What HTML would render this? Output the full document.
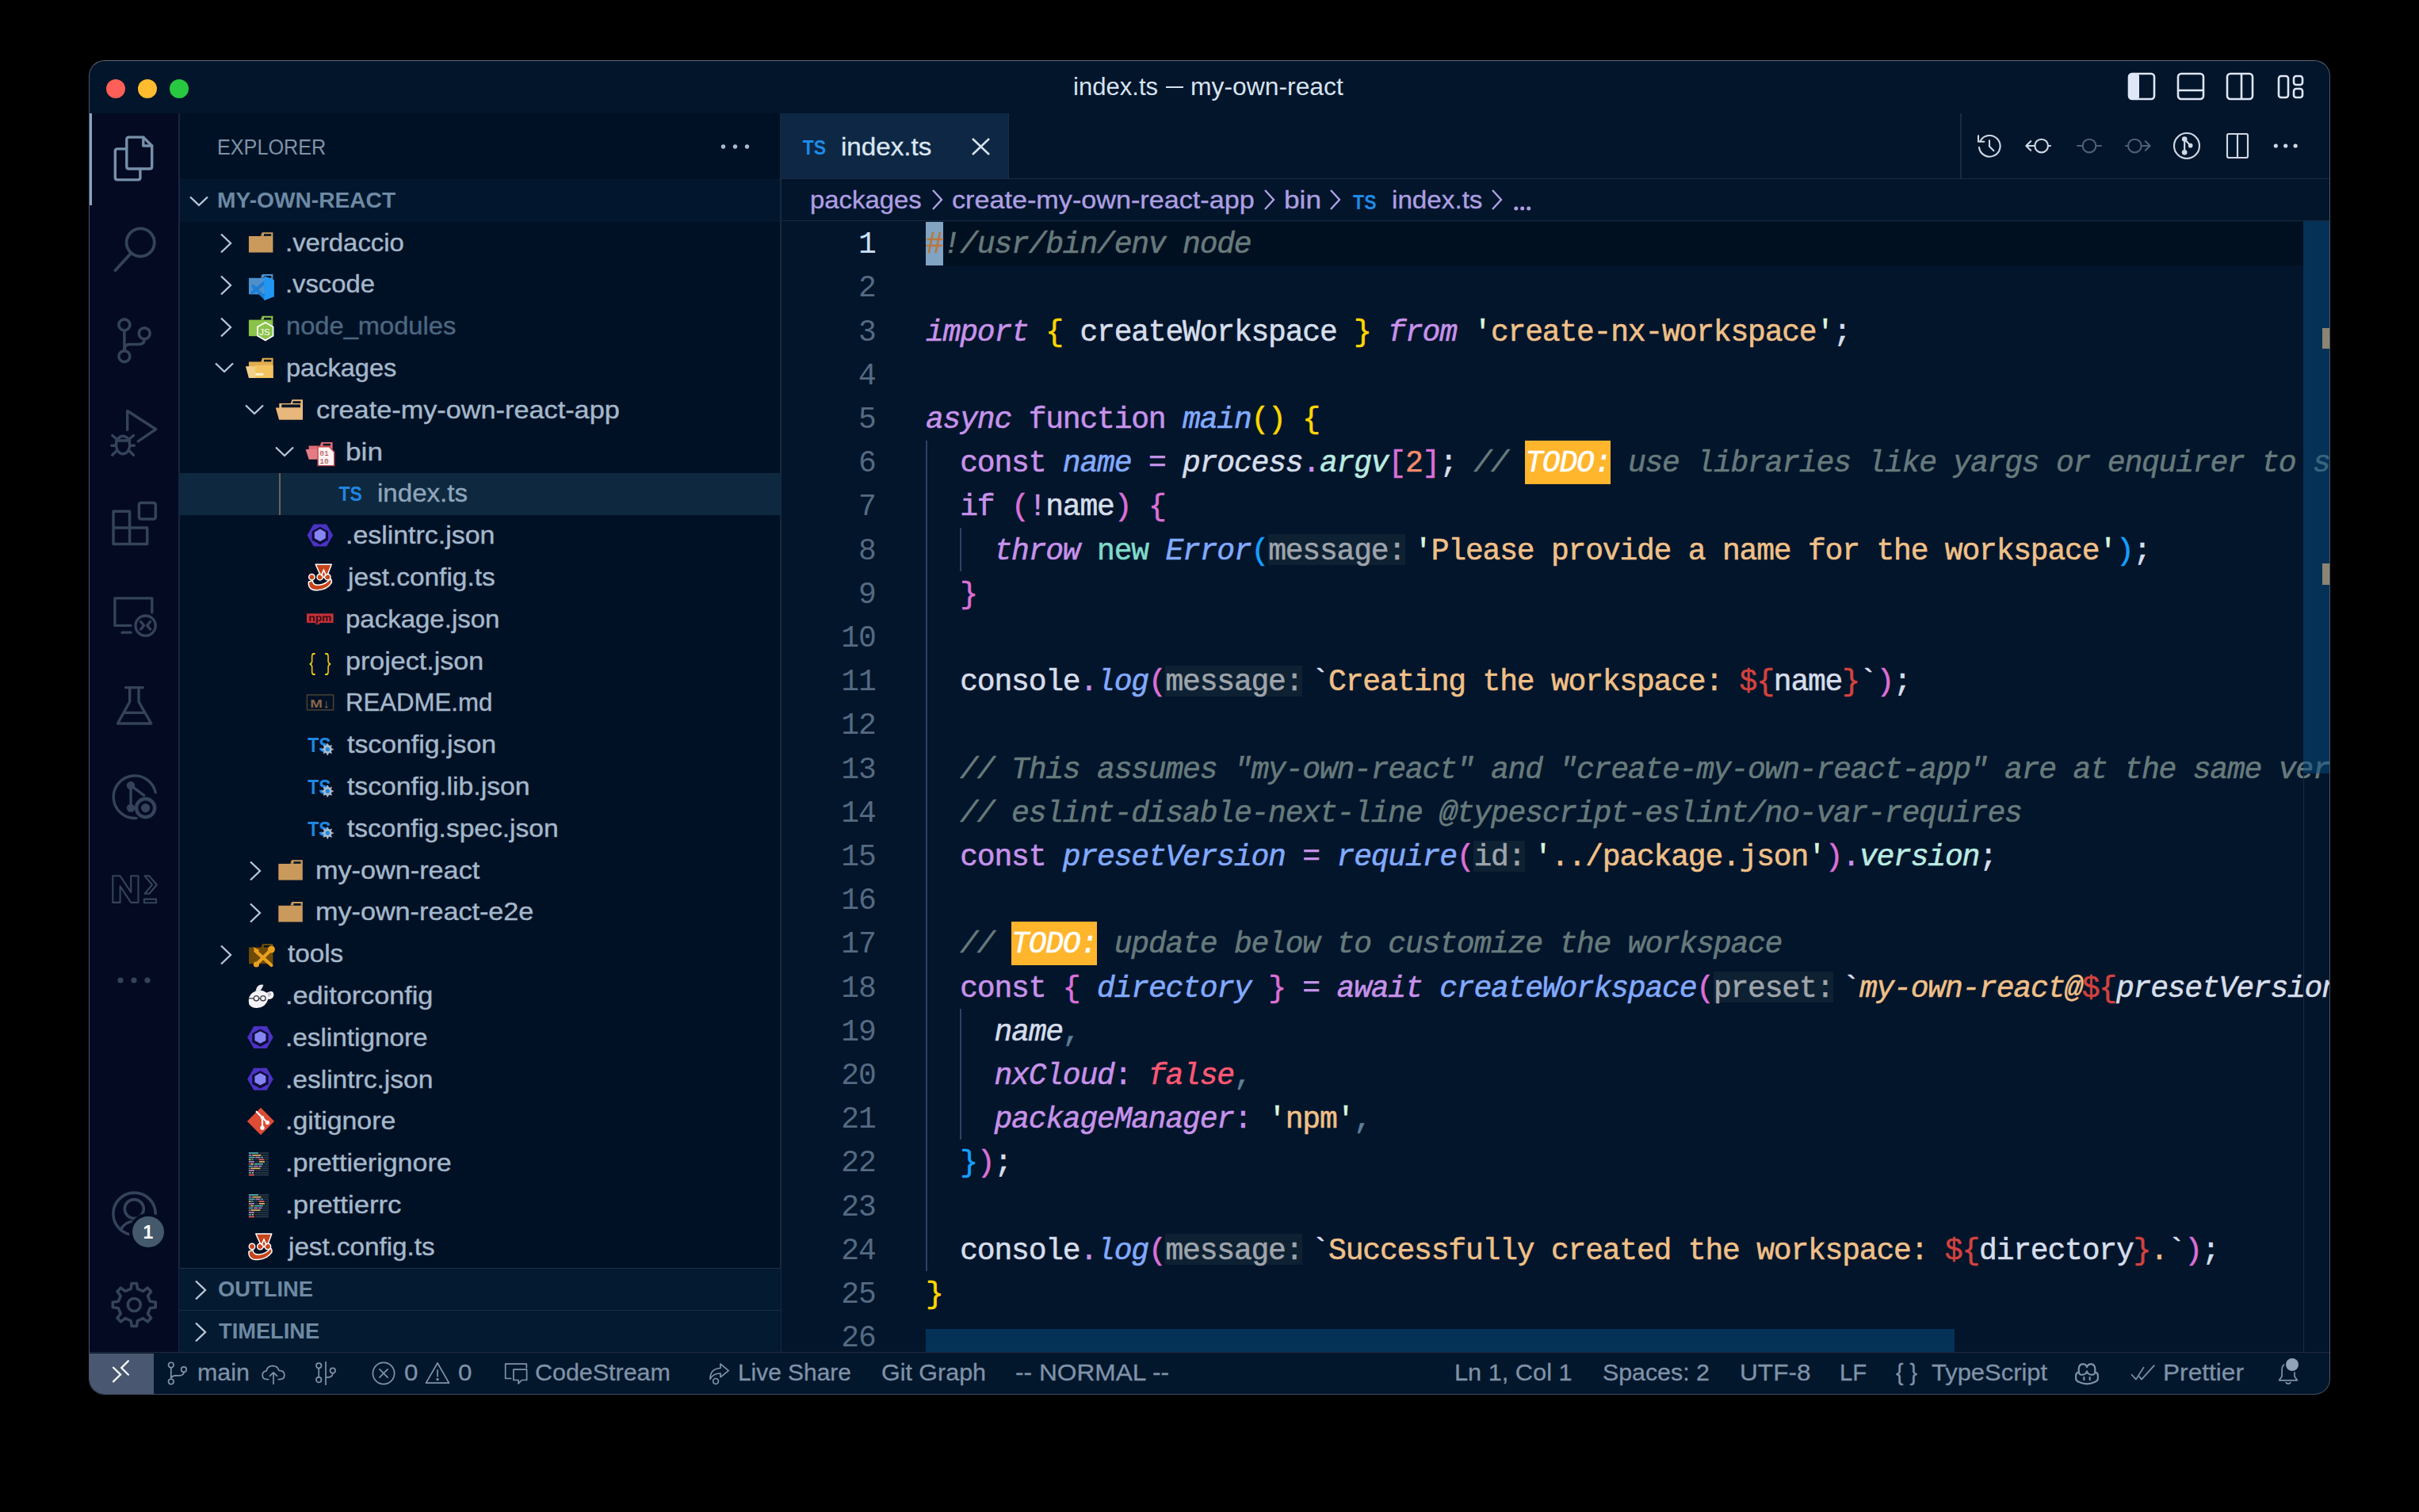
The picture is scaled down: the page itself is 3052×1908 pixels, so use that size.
<!DOCTYPE html>
<html><head><meta charset="utf-8"><title>index.ts — my-own-react</title>
<style>
html,body{margin:0;padding:0;background:#000;width:3052px;height:1908px;overflow:hidden;}
.r{position:absolute;box-sizing:border-box;}
.t{position:absolute;white-space:pre;}
svg.r{overflow:visible;}
</style></head><body>
<div class="r" style="left:113px;top:77px;width:2826px;height:1682px;background:#02152b;border-radius:19px;"></div>
<div class="r" style="left:0;top:0;width:3052px;height:1908px;clip-path:inset(77px 113px 149px 113px round 19px);">
<div class="r" style="left:113px;top:77px;width:2826px;height:66px;background:#02152b;"></div>
<div class="r" style="left:113px;top:143px;width:112px;height:1564px;background:#030a22;"></div>
<div class="r" style="left:226px;top:143px;width:759px;height:1564px;background:#011125;"></div>
<div class="r" style="left:225px;top:143px;width:2px;height:1564px;background:#18253f;"></div>
<div class="r" style="left:984px;top:143px;width:2px;height:1564px;background:#182840;"></div>
<div class="r" style="left:986px;top:143px;width:1953px;height:83px;background:#02152b;"></div>
<div class="r" style="left:986px;top:225px;width:1953px;height:2px;background:#1c2a44;"></div>
<div class="r" style="left:986px;top:226px;width:1953px;height:53px;background:#02152b;"></div>
<div class="r" style="left:986px;top:278px;width:1953px;height:1px;background:#15283e;"></div>
<div class="r" style="left:986px;top:279px;width:1953px;height:1428px;background:#02152b;"></div>
<div class="r" style="left:113px;top:1706px;width:2826px;height:2px;background:#25283f;"></div>
<div class="r" style="left:113px;top:1707px;width:2826px;height:52px;background:#02172c;"></div>
<div class="r" style="left:134px;top:100px;width:24px;height:24px;border-radius:12px;background:#fe5f57;"></div>
<div class="r" style="left:174px;top:100px;width:24px;height:24px;border-radius:12px;background:#febc2e;"></div>
<div class="r" style="left:214px;top:100px;width:24px;height:24px;border-radius:12px;background:#28c840;"></div>
<div class="t" style="left:1354.18px;top:91.44px;font:400 30.6px/36.72px 'Liberation Sans', sans-serif;color:#d6e3f0;transform:scaleX(1.0161);transform-origin:0 0;">index.ts</div>
<div class="r" style="left:1470.5px;top:109px;width:22.8px;height:2.2px;background:#d6e3f0;"></div>
<div class="t" style="left:1502.13px;top:91.44px;font:400 30.6px/36.72px 'Liberation Sans', sans-serif;color:#d6e3f0;transform:scaleX(1.0407);transform-origin:0 0;">my-own-react</div>
<svg class="r" style="left:2684px;top:91px;" width="36" height="36" viewBox="0 0 36 36"><rect x="2" y="2" width="32" height="32" rx="4" fill="none" stroke="#dfe6f5" stroke-width="2.6"/><rect x="2" y="2" width="13" height="32" rx="3" fill="#dfe6f5"/></svg>
<svg class="r" style="left:2746px;top:91px;" width="36" height="36" viewBox="0 0 36 36"><rect x="2" y="2" width="32" height="32" rx="4" fill="none" stroke="#dfe6f5" stroke-width="2.6"/><line x1="2" y1="23" x2="34" y2="23" stroke="#dfe6f5" stroke-width="2.6"/></svg>
<svg class="r" style="left:2808px;top:91px;" width="36" height="36" viewBox="0 0 36 36"><rect x="2" y="2" width="32" height="32" rx="4" fill="none" stroke="#dfe6f5" stroke-width="2.6"/><line x1="20" y1="2" x2="20" y2="34" stroke="#dfe6f5" stroke-width="2.6"/></svg>
<svg class="r" style="left:2872px;top:91px;" width="36" height="36" viewBox="0 0 36 36"><rect x="3" y="5" width="12" height="27" rx="3" fill="none" stroke="#dfe6f5" stroke-width="2.6"/><rect x="22" y="5" width="11" height="11" rx="3" fill="none" stroke="#dfe6f5" stroke-width="2.6"/><rect x="22" y="21" width="11" height="11" rx="3" fill="none" stroke="#dfe6f5" stroke-width="2.6"/></svg>
<div class="r" style="left:113px;top:143px;width:3px;height:116px;background:#8aa4bf;"></div>
<svg class="r" style="left:138px;top:166px;" width="62" height="68" viewBox="138 166 62 68"><g fill="none" stroke="#7790a9" stroke-width="3.4" stroke-linecap="round" stroke-linejoin="round"><path d="M159.8 176 Q159.8 173.1 162.6 173.1 H180.8 L191.7 184 V210.2 Q191.7 213 188.9 213 H162.6 Q159.8 213 159.8 210.2 Z"/><path d="M180.8 173.1 V184 H191.7" /><path d="M157.6 187.9 H148.1 Q145.3 187.9 145.3 190.7 V224.1 Q145.3 226.9 148.1 226.9 H174.1 Q176.9 226.9 176.9 224.1 V213.2"/></g></svg>
<svg class="r" style="left:138px;top:280px;" width="64" height="68" viewBox="138 280 64 68"><g fill="none" stroke="#34435a" stroke-width="3.8" stroke-linecap="round" stroke-linejoin="round"><circle cx="177.2" cy="306" r="17.6"/><path d="M145.4 341.2 L164.3 320.6"/></g></svg>
<svg class="r" style="left:140px;top:396px;" width="56" height="68" viewBox="140 396 56 68"><g fill="none" stroke="#34435a" stroke-width="3.6" stroke-linecap="round" stroke-linejoin="round"><circle cx="156.9" cy="409.9" r="7"/><circle cx="156.9" cy="449.6" r="7"/><circle cx="182.2" cy="420.7" r="7"/><path d="M156.9 416.9 V442.6"/><path d="M182.2 427.7 Q182.2 434.5 175.4 434.5 H164 Q156.9 434.5 156.9 441"/></g></svg>
<svg class="r" style="left:136px;top:512px;" width="66" height="68" viewBox="136 512 66 68"><g fill="none" stroke="#34435a" stroke-width="3.4" stroke-linecap="round" stroke-linejoin="round"><path d="M160.7 542.5 V518.5 L196.8 541.7 L174.3 556.9"/><ellipse cx="155.1" cy="561.5" rx="8.6" ry="11.2"/><path d="M146.5 556 H163.7"/><path d="M141.7 549.5 L146.8 553.8 M168.5 549.5 L163.4 553.8 M140.8 562.2 H146.5 M169.4 562.2 H163.7 M141.7 574.3 L147 569 M168.5 574.3 L163.2 569"/></g></svg>
<svg class="r" style="left:136px;top:626px;" width="68" height="68" viewBox="136 626 68 68"><g fill="none" stroke="#34435a" stroke-width="3.5" stroke-linecap="round" stroke-linejoin="round"><path d="M143 645.3 H163.6 V666 H185.7 V686.6 H143 Z M143 666 H163.6 V686.6"/><rect x="175.4" y="634.4" width="20.9" height="20.5" rx="2.5"/></g></svg>
<svg class="r" style="left:136px;top:746px;" width="68" height="62" viewBox="136 746 68 62"><g fill="none" stroke="#34435a" stroke-width="3.3" stroke-linecap="round" stroke-linejoin="round"><path d="M191.8 773 V754.9 H144.9 V789.3 H165"/><path d="M154 798.2 H165"/><circle cx="183.6" cy="789.6" r="12.6"/><path d="M177.6 784.5 L181.6 789.3 L177.6 794.1 M189.6 784.5 L185.6 789.3 L189.6 794.1"/></g></svg>
<svg class="r" style="left:140px;top:860px;" width="58" height="62" viewBox="140 860 58 62"><g fill="none" stroke="#34435a" stroke-width="3.4" stroke-linecap="round" stroke-linejoin="round"><path d="M158.4 867.6 H180.3 M163.7 867.6 V885.5 L148.5 913 H190.8 L175 885.5 V867.6 M157 899.4 H182.2"/></g></svg>
<svg class="r" style="left:136px;top:974px;" width="68" height="66" viewBox="136 974 68 66"><g fill="none" stroke="#34435a" stroke-width="3.4" stroke-linecap="round" stroke-linejoin="round"><path d="M196.2 1000 A26.8 26.8 0 1 0 172 1032.4"/><path d="M165 991.2 V1019.6 M165 991.2 L181.6 1003.7"/><circle cx="183.6" cy="1019.6" r="11.6" stroke-width="4.4"/><circle cx="165" cy="991.2" r="5.2" fill="#34435a" stroke="none"/><circle cx="165" cy="1019.6" r="5.2" fill="#34435a" stroke="none"/><circle cx="183.6" cy="1019.6" r="5.6" fill="#34435a" stroke="none"/></g></svg>
<svg class="r" style="left:136px;top:1098px;" width="68" height="48" viewBox="136 1098 68 48"><g fill="none" stroke="#34435a" stroke-width="2.1" stroke-linecap="round" stroke-linejoin="round"><path d="M142.3 1105.3 H151.6 L165.2 1125.8 V1105.3 H174.5 V1138.9 H165.2 L151.6 1118.4 V1138.9 H142.3 Z"/><path d="M182.6 1105.3 H188.4 L197.8 1116.5 L188.4 1127.7 H182.6 L192 1116.5 Z"/><rect x="181.9" y="1134.6" width="15.2" height="4.6"/></g></svg>
<svg class="r" style="left:144px;top:1230px;" width="50" height="14" viewBox="0 0 50 14"><circle cx="8" cy="7" r="3.6" fill="#34435a"/><circle cx="25" cy="7" r="3.6" fill="#34435a"/><circle cx="42" cy="7" r="3.6" fill="#34435a"/></svg>
<svg class="r" style="left:136px;top:1498px;" width="68" height="68" viewBox="136 1498 68 68"><g fill="none" stroke="#34435a" stroke-width="3.6" stroke-linecap="round" stroke-linejoin="round"><circle cx="169.5" cy="1531.7" r="26.6"/><circle cx="169.3" cy="1525.6" r="12"/><path d="M152.2 1551.6 Q158 1541.2 169.3 1541.2 Q180.6 1541.2 186.4 1551.6"/></g></svg>
<div class="r" style="left:167px;top:1534.7px;width:39.6px;height:39.6px;border-radius:20px;background:#44596b;box-shadow:0 0 0 4px #010c20;"></div>
<div class="t" style="left:167px;top:1534.7px;width:39.6px;height:39.6px;text-align:center;font:700 23px/40px 'Liberation Sans', sans-serif;color:#fff;">1</div>
<svg class="r" style="left:136px;top:1612px;" width="68" height="70" viewBox="136 1612 68 70"><g fill="none" stroke="#34435a" stroke-width="3.6" stroke-linecap="round" stroke-linejoin="round"><path d="M165.14 1626.43 L166.10 1619.49 L172.50 1619.49 L173.46 1626.43 L180.55 1629.37 L186.14 1625.14 L190.66 1629.66 L186.43 1635.25 L189.37 1642.34 L196.31 1643.30 L196.31 1649.70 L189.37 1650.66 L186.43 1657.75 L190.66 1663.34 L186.14 1667.86 L180.55 1663.63 L173.46 1666.57 L172.50 1673.51 L166.10 1673.51 L165.14 1666.57 L158.05 1663.63 L152.46 1667.86 L147.94 1663.34 L152.17 1657.75 L149.23 1650.66 L142.29 1649.70 L142.29 1643.30 L149.23 1642.34 L152.17 1635.25 L147.94 1629.66 L152.46 1625.14 L158.05 1629.37 Z"/><circle cx="169.3" cy="1646.5" r="8"/></g></svg>
<div class="t" style="left:274.48px;top:169.64px;font:400 27px/32.40px 'Liberation Sans', sans-serif;color:#7e93a9;transform:scaleX(0.9329);transform-origin:0 0;">EXPLORER</div>
<svg class="r" style="left:905px;top:178px;" width="46" height="14" viewBox="0 0 46 14"><circle cx="7.5" cy="7" r="2.7" fill="#a9bbce"/><circle cx="22.5" cy="7" r="2.7" fill="#a9bbce"/><circle cx="37.5" cy="7" r="2.7" fill="#a9bbce"/></svg>
<div class="r" style="left:227px;top:226px;width:757px;height:54px;background:#02172e;"></div>
<svg class="r" style="left:238px;top:246px;" width="26" height="16" viewBox="0 0 26 16"><path d="M2 2.5 L13 13 L24 2.5" fill="none" stroke="#b9c8d8" stroke-width="2.3"/></svg>
<div class="t" style="left:274.37px;top:237.44px;font:700 27px/32.40px 'Liberation Sans', sans-serif;color:#6e89a3;transform:scaleX(1.0422);transform-origin:0 0;">MY-OWN-REACT</div>
<svg class="r" style="left:277px;top:294px;" width="16" height="26" viewBox="0 0 16 26"><path d="M2 1.5 L14 13 L2 24.5" fill="none" stroke="#b9c8d8" stroke-width="2.3"/></svg>
<svg class="r" style="left:306px;top:284px;" width="44" height="44" viewBox="-22.399999999999977 -22.399999999999977 44 44"><path d="M-14.5 -8.4 H16 V12.2 H-14.5 Z" fill="#c99a5c"/><path d="M0.5 -8.6 L2.3 -13.2 H16 V-8.4 Z" fill="#c99a5c"/><rect x="4.6" y="-11.2" width="9.2" height="2.6" fill="#011627"/></svg>
<div class="t" style="left:360.24px;top:286.51px;font:400 32px/38.40px 'Liberation Sans', sans-serif;color:#a5b8cb;transform:scaleX(1.0275);transform-origin:0 0;-webkit-text-stroke:0.4px currentColor;">.verdaccio</div>
<svg class="r" style="left:277px;top:347px;" width="16" height="26" viewBox="0 0 16 26"><path d="M2 1.5 L14 13 L2 24.5" fill="none" stroke="#b9c8d8" stroke-width="2.3"/></svg>
<svg class="r" style="left:306px;top:337px;" width="44" height="44" viewBox="-22.399999999999977 -22.19999999999999 44 44"><path d="M-14.5 -8.4 H16 V12.2 H-14.5 Z" fill="#4f90cc"/><path d="M0.5 -8.6 L2.3 -13.2 H16 V-8.4 Z" fill="#4f90cc"/><rect x="4.6" y="-11.2" width="9.2" height="2.6" fill="#011627"/><path d="M6 -3 L-10 10 M6 17 L-9 2" stroke="#1c7fd6" stroke-width="4.2" stroke-linecap="round"/><path d="M5 -11 L17.5 -6 V15 L5 20 Z" fill="#2196f3"/></svg>
<div class="t" style="left:360.25px;top:339.31px;font:400 32px/38.40px 'Liberation Sans', sans-serif;color:#a5b8cb;transform:scaleX(1.0234);transform-origin:0 0;-webkit-text-stroke:0.4px currentColor;">.vscode</div>
<svg class="r" style="left:277px;top:400px;" width="16" height="26" viewBox="0 0 16 26"><path d="M2 1.5 L14 13 L2 24.5" fill="none" stroke="#b9c8d8" stroke-width="2.3"/></svg>
<svg class="r" style="left:306px;top:390px;" width="44" height="44" viewBox="-22.399999999999977 -22.0 44 44"><path d="M-14.5 -8.4 H16 V12.2 H-14.5 Z" fill="#8bc34a"/><path d="M0.5 -8.6 L2.3 -13.2 H16 V-8.4 Z" fill="#8bc34a"/><rect x="4.6" y="-11.2" width="9.2" height="2.6" fill="#011627"/><path d="M6.4 -5 L16.2 0.6 V11.8 L6.4 17.4 L-3.4 11.8 V0.6 Z" fill="#8bc34a" stroke="#ffffff" stroke-width="1.7"/><text x="-1.2" y="10.8" font-family="Liberation Sans" font-size="11.5" fill="#ffffff">JS</text></svg>
<div class="t" style="left:361.08px;top:392.11px;font:400 32px/38.40px 'Liberation Sans', sans-serif;color:#4c6781;transform:scaleX(1.0207);transform-origin:0 0;-webkit-text-stroke:0.4px currentColor;">node_modules</div>
<svg class="r" style="left:270px;top:456px;" width="26" height="16" viewBox="0 0 26 16"><path d="M2 2.5 L13 13 L24 2.5" fill="none" stroke="#b9c8d8" stroke-width="2.3"/></svg>
<svg class="r" style="left:306px;top:443px;" width="44" height="44" viewBox="-22.399999999999977 -21.799999999999955 44 44"><path d="M-14.5 -8.4 H1 L2.6 -13 H16.2 V12.2 H-14.5 Z" fill="#e2ad4e"/><rect x="4.5" y="-11" width="9.5" height="2.6" fill="#011627"/><path d="M-18.5 -2.6 H12 L16.2 12.2 H-14.5 Z" fill="#f0d08a"/><rect x="-6" y="-4" width="22.2" height="16.2" fill="#f2c35e"/><rect x="-6" y="6" width="10" height="3" fill="#fff3d0"/></svg>
<div class="t" style="left:361.09px;top:444.91px;font:400 32px/38.40px 'Liberation Sans', sans-serif;color:#a5b8cb;transform:scaleX(1.0167);transform-origin:0 0;-webkit-text-stroke:0.4px currentColor;">packages</div>
<svg class="r" style="left:308px;top:509px;" width="26" height="16" viewBox="0 0 26 16"><path d="M2 2.5 L13 13 L24 2.5" fill="none" stroke="#b9c8d8" stroke-width="2.3"/></svg>
<svg class="r" style="left:344px;top:496px;" width="44" height="44" viewBox="-21.80000000000001 -21.600000000000023 44 44"><path d="M-13.5 -8.6 H1.1 L2.6 -13.3 H16.2 V11.9 H-13.5 Z" fill="#e8b77c"/><rect x="3.6" y="-11.4" width="10" height="2.8" fill="#011627"/><rect x="-10.5" y="-7.2" width="23.6" height="4" fill="#011627"/><path d="M-18 -3.2 H13.6 L16.2 11.9 H-13.8 Z" fill="#e8b77c"/></svg>
<div class="t" style="left:399.23px;top:497.71px;font:400 32px/38.40px 'Liberation Sans', sans-serif;color:#a5b8cb;transform:scaleX(1.0708);transform-origin:0 0;-webkit-text-stroke:0.4px currentColor;">create-my-own-react-app</div>
<svg class="r" style="left:346px;top:562px;" width="26" height="16" viewBox="0 0 26 16"><path d="M2 2.5 L13 13 L24 2.5" fill="none" stroke="#b9c8d8" stroke-width="2.3"/></svg>
<svg class="r" style="left:382px;top:548px;" width="44" height="44" viewBox="-21.80000000000001 -22.399999999999977 44 44"><path d="M-14.2 -8 H0 L1.5 -12.4 H15.8 V9 H-14.2 Z" fill="#e06c75"/><rect x="3.8" y="-10.6" width="9.5" height="2.6" fill="#011627"/><path d="M-18.2 -3.3 H0 L2 9 H-14.2 Z" fill="#e57c84"/><path d="M-2.7 -6.6 H11.5 L17.9 0 V17.2 H-2.7 Z" fill="#fdf3f3" stroke="#c9454f" stroke-width="1.4"/><text x="-0.6" y="4.8" font-family="Liberation Mono" font-size="9.5" fill="#a63a40">01</text><text x="-0.6" y="14.4" font-family="Liberation Mono" font-size="9.5" fill="#a63a40">10</text></svg>
<div class="t" style="left:436.31px;top:550.51px;font:400 32px/38.40px 'Liberation Sans', sans-serif;color:#a5b8cb;transform:scaleX(1.0996);transform-origin:0 0;-webkit-text-stroke:0.4px currentColor;">bin</div>
<div class="r" style="left:226px;top:597px;width:759px;height:53px;background:#0e293f;"></div>
<div class="r" style="left:352px;top:597px;width:2px;height:53px;background:#6b6256;"></div>
<svg class="r" style="left:421px;top:601px;" width="44" height="44" viewBox="-22.099999999999966 -22.199999999999932 44 44"><text x="-15.6" y="9" font-family="Liberation Sans" font-weight="700" font-size="26.5" fill="#1f86e0" textLength="29.4" lengthAdjust="spacingAndGlyphs">TS</text></svg>
<div class="t" style="left:475.75px;top:603.31px;font:400 32px/38.40px 'Liberation Sans', sans-serif;color:#8fa5bb;transform:scaleX(1.0333);transform-origin:0 0;-webkit-text-stroke:0.4px currentColor;">index.ts</div>
<svg class="r" style="left:382px;top:654px;" width="44" height="44" viewBox="-21.80000000000001 -21.999999999999886 44 44"><path d="M-16.3 -0.6 L-8.1 -14.6 H8.2 L16.4 -0.6 L8.2 13.4 H-8.1 Z" fill="#4b32c3"/><path d="M0 -11.2 L10.2 -5.6 V5.6 L0 11.2 L-10.2 5.6 V-5.6 Z" fill="#0f0d3a"/><path d="M0 -7.8 L7 -3.9 V3.9 L0 7.8 L-7 3.9 V-3.9 Z" fill="#8585f5" transform="translate(0,-0.6)"/></svg>
<div class="t" style="left:435.55px;top:656.11px;font:400 32px/38.40px 'Liberation Sans', sans-serif;color:#a5b8cb;transform:scaleX(1.0590);transform-origin:0 0;-webkit-text-stroke:0.4px currentColor;">.eslintrc.json</div>
<svg class="r" style="left:382px;top:707px;" width="44" height="44" viewBox="-21.80000000000001 -21.799999999999955 44 44"><g stroke="#ffffff" stroke-width="1.5" stroke-linejoin="round"><path d="M-5.6 -16.6 H14.4 L8.2 -0.2 H1.8 Z" fill="#c7441b"/><path d="M-14.4 5.5 Q-15.5 16.5 -3 16 Q9 15 14.5 6.5 Q15 3 13 1.5 Q7 9 -1.5 9.5 Q-8.5 10 -9.5 4 Z" fill="#c7441b"/><circle cx="-10.4" cy="-0.6" r="3.7" fill="#c7441b"/><circle cx="-0.1" cy="-0.6" r="3.7" fill="#c7441b"/><circle cx="9.5" cy="-0.6" r="3.7" fill="#c7441b"/></g><path d="M1.4 -2.2 L4.6 -9.6 L7.8 -2.2" fill="none" stroke="#ffffff" stroke-width="1.6"/></svg>
<div class="t" style="left:439.44px;top:708.91px;font:400 32px/38.40px 'Liberation Sans', sans-serif;color:#a5b8cb;transform:scaleX(1.0439);transform-origin:0 0;-webkit-text-stroke:0.4px currentColor;">jest.config.ts</div>
<svg class="r" style="left:382px;top:760px;" width="44" height="44" viewBox="-21.80000000000001 -21.600000000000023 44 44"><rect x="-16.8" y="-7.3" width="33.6" height="11.6" fill="#c8323a"/><rect x="-6" y="4" width="5.5" height="2.2" fill="#c8323a"/><text x="-14.5" y="2.4" font-family="Liberation Sans" font-weight="700" font-size="12.5" fill="#3a0c12" textLength="29" lengthAdjust="spacingAndGlyphs">npm</text></svg>
<div class="t" style="left:436.46px;top:761.71px;font:400 32px/38.40px 'Liberation Sans', sans-serif;color:#a5b8cb;transform:scaleX(1.0308);transform-origin:0 0;-webkit-text-stroke:0.4px currentColor;">package.json</div>
<svg class="r" style="left:382px;top:812px;" width="44" height="44" viewBox="-21.80000000000001 -22.399999999999977 44 44"><text x="-15" y="12" font-family="Liberation Mono" font-size="30" fill="#f3cf1e" textLength="30" lengthAdjust="spacingAndGlyphs">{ }</text></svg>
<div class="t" style="left:436.39px;top:814.51px;font:400 32px/38.40px 'Liberation Sans', sans-serif;color:#a5b8cb;transform:scaleX(1.0638);transform-origin:0 0;-webkit-text-stroke:0.4px currentColor;">project.json</div>
<svg class="r" style="left:382px;top:865px;" width="44" height="44" viewBox="-21.80000000000001 -22.199999999999932 44 44"><rect x="-16.4" y="-10.3" width="33.2" height="19" fill="none" stroke="#4e4536" stroke-width="1.4"/><text x="-12.5" y="5.6" font-family="Liberation Sans" font-weight="700" font-size="15" fill="#8a6546" textLength="25" lengthAdjust="spacingAndGlyphs">M↓</text></svg>
<div class="t" style="left:436.11px;top:867.31px;font:400 32px/38.40px 'Liberation Sans', sans-serif;color:#a5b8cb;transform:scaleX(0.9736);transform-origin:0 0;-webkit-text-stroke:0.4px currentColor;">README.md</div>
<svg class="r" style="left:382px;top:918px;" width="44" height="44" viewBox="-21.80000000000001 -21.999999999999886 44 44"><text x="-15.6" y="9" font-family="Liberation Sans" font-weight="700" font-size="26.5" fill="#1f86e0" textLength="29.4" lengthAdjust="spacingAndGlyphs">TS</text><path d="M14.80 4.55 L16.87 4.90 L16.87 6.30 L14.80 6.65 L13.99 8.60 L15.20 10.32 L14.22 11.30 L12.50 10.09 L10.55 10.90 L10.20 12.97 L8.80 12.97 L8.45 10.90 L6.50 10.09 L4.78 11.30 L3.80 10.32 L5.01 8.60 L4.20 6.65 L2.13 6.30 L2.13 4.90 L4.20 4.55 L5.01 2.60 L3.80 0.88 L4.78 -0.10 L6.50 1.11 L8.45 0.30 L8.80 -1.77 L10.20 -1.77 L10.55 0.30 L12.50 1.11 L14.22 -0.10 L15.20 0.88 L13.99 2.60 Z" fill="#a9bccb"/><circle cx="9.5" cy="5.6" r="2.6" fill="#1f86e0"/></svg>
<div class="t" style="left:438.09px;top:920.11px;font:400 32px/38.40px 'Liberation Sans', sans-serif;color:#a5b8cb;transform:scaleX(1.0573);transform-origin:0 0;-webkit-text-stroke:0.4px currentColor;">tsconfig.json</div>
<svg class="r" style="left:382px;top:971px;" width="44" height="44" viewBox="-21.80000000000001 -21.799999999999955 44 44"><text x="-15.6" y="9" font-family="Liberation Sans" font-weight="700" font-size="26.5" fill="#1f86e0" textLength="29.4" lengthAdjust="spacingAndGlyphs">TS</text><path d="M14.80 4.55 L16.87 4.90 L16.87 6.30 L14.80 6.65 L13.99 8.60 L15.20 10.32 L14.22 11.30 L12.50 10.09 L10.55 10.90 L10.20 12.97 L8.80 12.97 L8.45 10.90 L6.50 10.09 L4.78 11.30 L3.80 10.32 L5.01 8.60 L4.20 6.65 L2.13 6.30 L2.13 4.90 L4.20 4.55 L5.01 2.60 L3.80 0.88 L4.78 -0.10 L6.50 1.11 L8.45 0.30 L8.80 -1.77 L10.20 -1.77 L10.55 0.30 L12.50 1.11 L14.22 -0.10 L15.20 0.88 L13.99 2.60 Z" fill="#a9bccb"/><circle cx="9.5" cy="5.6" r="2.6" fill="#1f86e0"/></svg>
<div class="t" style="left:438.09px;top:972.91px;font:400 32px/38.40px 'Liberation Sans', sans-serif;color:#a5b8cb;transform:scaleX(1.0538);transform-origin:0 0;-webkit-text-stroke:0.4px currentColor;">tsconfig.lib.json</div>
<svg class="r" style="left:382px;top:1024px;" width="44" height="44" viewBox="-21.80000000000001 -21.59999999999991 44 44"><text x="-15.6" y="9" font-family="Liberation Sans" font-weight="700" font-size="26.5" fill="#1f86e0" textLength="29.4" lengthAdjust="spacingAndGlyphs">TS</text><path d="M14.80 4.55 L16.87 4.90 L16.87 6.30 L14.80 6.65 L13.99 8.60 L15.20 10.32 L14.22 11.30 L12.50 10.09 L10.55 10.90 L10.20 12.97 L8.80 12.97 L8.45 10.90 L6.50 10.09 L4.78 11.30 L3.80 10.32 L5.01 8.60 L4.20 6.65 L2.13 6.30 L2.13 4.90 L4.20 4.55 L5.01 2.60 L3.80 0.88 L4.78 -0.10 L6.50 1.11 L8.45 0.30 L8.80 -1.77 L10.20 -1.77 L10.55 0.30 L12.50 1.11 L14.22 -0.10 L15.20 0.88 L13.99 2.60 Z" fill="#a9bccb"/><circle cx="9.5" cy="5.6" r="2.6" fill="#1f86e0"/></svg>
<div class="t" style="left:438.10px;top:1025.71px;font:400 32px/38.40px 'Liberation Sans', sans-serif;color:#a5b8cb;transform:scaleX(1.0483);transform-origin:0 0;-webkit-text-stroke:0.4px currentColor;">tsconfig.spec.json</div>
<svg class="r" style="left:314px;top:1086px;" width="16" height="26" viewBox="0 0 16 26"><path d="M2 1.5 L14 13 L2 24.5" fill="none" stroke="#b9c8d8" stroke-width="2.3"/></svg>
<svg class="r" style="left:344px;top:1076px;" width="44" height="44" viewBox="-21.80000000000001 -22.40000000000009 44 44"><path d="M-14.5 -8.4 H16 V12.2 H-14.5 Z" fill="#c99a5c"/><path d="M0.5 -8.6 L2.3 -13.2 H16 V-8.4 Z" fill="#c99a5c"/><rect x="4.6" y="-11.2" width="9.2" height="2.6" fill="#011627"/></svg>
<div class="t" style="left:398.38px;top:1078.51px;font:400 32px/38.40px 'Liberation Sans', sans-serif;color:#a5b8cb;transform:scaleX(1.0693);transform-origin:0 0;-webkit-text-stroke:0.4px currentColor;">my-own-react</div>
<svg class="r" style="left:314px;top:1139px;" width="16" height="26" viewBox="0 0 16 26"><path d="M2 1.5 L14 13 L2 24.5" fill="none" stroke="#b9c8d8" stroke-width="2.3"/></svg>
<svg class="r" style="left:344px;top:1129px;" width="44" height="44" viewBox="-21.80000000000001 -22.200000000000045 44 44"><path d="M-14.5 -8.4 H16 V12.2 H-14.5 Z" fill="#c99a5c"/><path d="M0.5 -8.6 L2.3 -13.2 H16 V-8.4 Z" fill="#c99a5c"/><rect x="4.6" y="-11.2" width="9.2" height="2.6" fill="#011627"/></svg>
<div class="t" style="left:398.38px;top:1131.31px;font:400 32px/38.40px 'Liberation Sans', sans-serif;color:#a5b8cb;transform:scaleX(1.0679);transform-origin:0 0;-webkit-text-stroke:0.4px currentColor;">my-own-react-e2e</div>
<svg class="r" style="left:277px;top:1192px;" width="16" height="26" viewBox="0 0 16 26"><path d="M2 1.5 L14 13 L2 24.5" fill="none" stroke="#b9c8d8" stroke-width="2.3"/></svg>
<svg class="r" style="left:306px;top:1182px;" width="44" height="44" viewBox="-22.399999999999977 -22.0 44 44"><path d="M-14.4 -8.4 H1 L2.8 -13 H16 V12.2 H-14.4 Z" fill="#6e4a05"/><rect x="4.6" y="-11" width="9" height="2.4" fill="#011627"/><g stroke="#e9a01c" stroke-width="4.2" stroke-linecap="round"><path d="M-6 -4 L14 14"/><path d="M13 -5 L-5 13"/></g><path d="M-9 -9 L-1 -5 L-5 0 Z" fill="#e9a01c"/><circle cx="14" cy="-6" r="4.5" fill="#e9a01c"/><circle cx="-5" cy="13" r="3.6" fill="#e9a01c"/></svg>
<div class="t" style="left:362.70px;top:1184.11px;font:400 32px/38.40px 'Liberation Sans', sans-serif;color:#a5b8cb;transform:scaleX(1.0391);transform-origin:0 0;-webkit-text-stroke:0.4px currentColor;">tools</div>
<svg class="r" style="left:306px;top:1235px;" width="44" height="44" viewBox="-22.399999999999977 -21.800000000000182 44 44"><path d="M-14 11 Q-17 -2 -6 -6 Q2 -9 8 -4 Q17 -9 17 -1 Q16 5 10 4 Q7 14 -3 15 Q-10 16 -14 11 Z" fill="#f4f4f6"/><path d="M-6 -6 Q-4 -16 4 -14 Q2 -8 -1 -6 Z" fill="#e8e8ee"/><path d="M9 -3 Q12 -6 14 -3 Q13 1 10 1 Z" fill="#c9c0d6"/><g fill="none" stroke="#3a3a44" stroke-width="1.3"><circle cx="-5" cy="3" r="3.2"/><circle cx="3.5" cy="3" r="3.2"/><path d="M-1.8 3 H0.3 M-8.2 3 H-15"/></g></svg>
<div class="t" style="left:360.12px;top:1236.91px;font:400 32px/38.40px 'Liberation Sans', sans-serif;color:#a5b8cb;transform:scaleX(1.0692);transform-origin:0 0;-webkit-text-stroke:0.4px currentColor;">.editorconfig</div>
<svg class="r" style="left:306px;top:1288px;" width="44" height="44" viewBox="-22.399999999999977 -21.59999999999991 44 44"><path d="M-16.3 -0.6 L-8.1 -14.6 H8.2 L16.4 -0.6 L8.2 13.4 H-8.1 Z" fill="#4b32c3"/><path d="M0 -11.2 L10.2 -5.6 V5.6 L0 11.2 L-10.2 5.6 V-5.6 Z" fill="#0f0d3a"/><path d="M0 -7.8 L7 -3.9 V3.9 L0 7.8 L-7 3.9 V-3.9 Z" fill="#8585f5" transform="translate(0,-0.6)"/></svg>
<div class="t" style="left:360.20px;top:1289.71px;font:400 32px/38.40px 'Liberation Sans', sans-serif;color:#a5b8cb;transform:scaleX(1.0407);transform-origin:0 0;-webkit-text-stroke:0.4px currentColor;">.eslintignore</div>
<svg class="r" style="left:306px;top:1340px;" width="44" height="44" viewBox="-22.399999999999977 -22.40000000000009 44 44"><path d="M-16.3 -0.6 L-8.1 -14.6 H8.2 L16.4 -0.6 L8.2 13.4 H-8.1 Z" fill="#4b32c3"/><path d="M0 -11.2 L10.2 -5.6 V5.6 L0 11.2 L-10.2 5.6 V-5.6 Z" fill="#0f0d3a"/><path d="M0 -7.8 L7 -3.9 V3.9 L0 7.8 L-7 3.9 V-3.9 Z" fill="#8585f5" transform="translate(0,-0.6)"/></svg>
<div class="t" style="left:360.18px;top:1342.51px;font:400 32px/38.40px 'Liberation Sans', sans-serif;color:#a5b8cb;transform:scaleX(1.0475);transform-origin:0 0;-webkit-text-stroke:0.4px currentColor;">.eslintrc.json</div>
<svg class="r" style="left:306px;top:1393px;" width="44" height="44" viewBox="-22.399999999999977 -22.200000000000045 44 44"><path d="M0.6 -17.4 L17.8 -0.2 L0.6 17 L-16.6 -0.2 Z" fill="#dd4c35"/><g stroke="#ffffff" stroke-width="2.2" fill="none"><path d="M-5.4 -13 L2.6 -5 V7 M2.6 -5 L8.6 1"/></g><circle cx="2.6" cy="8" r="2.6" fill="#fff"/><circle cx="9" cy="1.4" r="2.6" fill="#fff"/><circle cx="2.6" cy="-5" r="2.2" fill="#fff"/></svg>
<div class="t" style="left:360.15px;top:1395.31px;font:400 32px/38.40px 'Liberation Sans', sans-serif;color:#a5b8cb;transform:scaleX(1.0576);transform-origin:0 0;-webkit-text-stroke:0.4px currentColor;">.gitignore</div>
<svg class="r" style="left:306px;top:1446px;" width="44" height="44" viewBox="-22.399999999999977 -22.0 44 44"><rect x="-14.6" y="-13.80" width="12.2" height="1.7" fill="#56b3b4"/><rect x="-1.6" y="-13.80" width="12.2" height="1.7" fill="#2a3a48"/><rect x="-14.6" y="-11.04" width="3.7" height="1.7" fill="#bf85bf"/><rect x="-10.1" y="-11.04" width="11.2" height="1.7" fill="#e7bd62"/><rect x="1.9" y="-11.04" width="8.7" height="1.7" fill="#2a3a48"/><rect x="-14.6" y="-8.28" width="7.7" height="1.7" fill="#56b3b4"/><rect x="-6.1" y="-8.28" width="6.2" height="1.7" fill="#bf85bf"/><rect x="0.9" y="-8.28" width="2.7" height="1.7" fill="#56b3b4"/><rect x="4.4" y="-8.28" width="6.2" height="1.7" fill="#2a3a48"/><rect x="-14.6" y="-5.52" width="2.7" height="1.7" fill="#e7bd62"/><rect x="-11.1" y="-5.52" width="2.2" height="1.7" fill="#56b3b4"/><rect x="-8.1" y="-5.52" width="5.2" height="1.7" fill="#2a3a48"/><rect x="-2.1" y="-5.52" width="7.2" height="1.7" fill="#ea5e5e"/><rect x="5.9" y="-5.52" width="4.7" height="1.7" fill="#2a3a48"/><rect x="-14.6" y="-2.76" width="7.2" height="1.7" fill="#bf85bf"/><rect x="-6.6" y="-2.76" width="4.2" height="1.7" fill="#2a3a48"/><rect x="-1.6" y="-2.76" width="7.2" height="1.7" fill="#e7bd62"/><rect x="6.4" y="-2.76" width="4.2" height="1.7" fill="#2a3a48"/><rect x="-14.6" y="-0.00" width="1.2" height="1.7" fill="#ea5e5e"/><rect x="-12.6" y="-0.00" width="4.2" height="1.7" fill="#e7bd62"/><rect x="-7.6" y="-0.00" width="11.2" height="1.7" fill="#56b3b4"/><rect x="4.4" y="-0.00" width="6.2" height="1.7" fill="#2a3a48"/><rect x="-14.6" y="2.76" width="5.2" height="1.7" fill="#56b3b4"/><rect x="-8.6" y="2.76" width="5.7" height="1.7" fill="#bf85bf"/><rect x="-2.1" y="2.76" width="4.2" height="1.7" fill="#bf85bf"/><rect x="2.9" y="2.76" width="7.7" height="1.7" fill="#2a3a48"/><rect x="-14.6" y="5.52" width="1.7" height="1.7" fill="#bf85bf"/><rect x="-12.1" y="5.52" width="12.2" height="1.7" fill="#e7bd62"/><rect x="0.9" y="5.52" width="9.7" height="1.7" fill="#2a3a48"/><rect x="-14.6" y="8.28" width="7.2" height="1.7" fill="#bf85bf"/><rect x="-6.6" y="8.28" width="17.2" height="1.7" fill="#2a3a48"/><rect x="-14.6" y="11.04" width="3.2" height="1.7" fill="#56b3b4"/><rect x="-10.6" y="11.04" width="2.2" height="1.7" fill="#e7bd62"/><rect x="-7.6" y="11.04" width="18.2" height="1.7" fill="#2a3a48"/><rect x="-14.6" y="13.80" width="7.2" height="1.7" fill="#ea5e5e"/><rect x="-6.6" y="13.80" width="17.2" height="1.7" fill="#2a3a48"/></svg>
<div class="t" style="left:360.14px;top:1448.11px;font:400 32px/38.40px 'Liberation Sans', sans-serif;color:#a5b8cb;transform:scaleX(1.0615);transform-origin:0 0;-webkit-text-stroke:0.4px currentColor;">.prettierignore</div>
<svg class="r" style="left:306px;top:1499px;" width="44" height="44" viewBox="-22.399999999999977 -21.799999999999955 44 44"><rect x="-14.6" y="-13.80" width="12.2" height="1.7" fill="#56b3b4"/><rect x="-1.6" y="-13.80" width="12.2" height="1.7" fill="#2a3a48"/><rect x="-14.6" y="-11.04" width="3.7" height="1.7" fill="#bf85bf"/><rect x="-10.1" y="-11.04" width="11.2" height="1.7" fill="#e7bd62"/><rect x="1.9" y="-11.04" width="8.7" height="1.7" fill="#2a3a48"/><rect x="-14.6" y="-8.28" width="7.7" height="1.7" fill="#56b3b4"/><rect x="-6.1" y="-8.28" width="6.2" height="1.7" fill="#bf85bf"/><rect x="0.9" y="-8.28" width="2.7" height="1.7" fill="#56b3b4"/><rect x="4.4" y="-8.28" width="6.2" height="1.7" fill="#2a3a48"/><rect x="-14.6" y="-5.52" width="2.7" height="1.7" fill="#e7bd62"/><rect x="-11.1" y="-5.52" width="2.2" height="1.7" fill="#56b3b4"/><rect x="-8.1" y="-5.52" width="5.2" height="1.7" fill="#2a3a48"/><rect x="-2.1" y="-5.52" width="7.2" height="1.7" fill="#ea5e5e"/><rect x="5.9" y="-5.52" width="4.7" height="1.7" fill="#2a3a48"/><rect x="-14.6" y="-2.76" width="7.2" height="1.7" fill="#bf85bf"/><rect x="-6.6" y="-2.76" width="4.2" height="1.7" fill="#2a3a48"/><rect x="-1.6" y="-2.76" width="7.2" height="1.7" fill="#e7bd62"/><rect x="6.4" y="-2.76" width="4.2" height="1.7" fill="#2a3a48"/><rect x="-14.6" y="-0.00" width="1.2" height="1.7" fill="#ea5e5e"/><rect x="-12.6" y="-0.00" width="4.2" height="1.7" fill="#e7bd62"/><rect x="-7.6" y="-0.00" width="11.2" height="1.7" fill="#56b3b4"/><rect x="4.4" y="-0.00" width="6.2" height="1.7" fill="#2a3a48"/><rect x="-14.6" y="2.76" width="5.2" height="1.7" fill="#56b3b4"/><rect x="-8.6" y="2.76" width="5.7" height="1.7" fill="#bf85bf"/><rect x="-2.1" y="2.76" width="4.2" height="1.7" fill="#bf85bf"/><rect x="2.9" y="2.76" width="7.7" height="1.7" fill="#2a3a48"/><rect x="-14.6" y="5.52" width="1.7" height="1.7" fill="#bf85bf"/><rect x="-12.1" y="5.52" width="12.2" height="1.7" fill="#e7bd62"/><rect x="0.9" y="5.52" width="9.7" height="1.7" fill="#2a3a48"/><rect x="-14.6" y="8.28" width="7.2" height="1.7" fill="#bf85bf"/><rect x="-6.6" y="8.28" width="17.2" height="1.7" fill="#2a3a48"/><rect x="-14.6" y="11.04" width="3.2" height="1.7" fill="#56b3b4"/><rect x="-10.6" y="11.04" width="2.2" height="1.7" fill="#e7bd62"/><rect x="-7.6" y="11.04" width="18.2" height="1.7" fill="#2a3a48"/><rect x="-14.6" y="13.80" width="7.2" height="1.7" fill="#ea5e5e"/><rect x="-6.6" y="13.80" width="17.2" height="1.7" fill="#2a3a48"/></svg>
<div class="t" style="left:360.08px;top:1500.91px;font:400 32px/38.40px 'Liberation Sans', sans-serif;color:#a5b8cb;transform:scaleX(1.0827);transform-origin:0 0;-webkit-text-stroke:0.4px currentColor;">.prettierrc</div>
<svg class="r" style="left:306px;top:1552px;" width="44" height="44" viewBox="-22.399999999999977 -21.59999999999991 44 44"><g stroke="#ffffff" stroke-width="1.5" stroke-linejoin="round"><path d="M-5.6 -16.6 H14.4 L8.2 -0.2 H1.8 Z" fill="#c7441b"/><path d="M-14.4 5.5 Q-15.5 16.5 -3 16 Q9 15 14.5 6.5 Q15 3 13 1.5 Q7 9 -1.5 9.5 Q-8.5 10 -9.5 4 Z" fill="#c7441b"/><circle cx="-10.4" cy="-0.6" r="3.7" fill="#c7441b"/><circle cx="-0.1" cy="-0.6" r="3.7" fill="#c7441b"/><circle cx="9.5" cy="-0.6" r="3.7" fill="#c7441b"/></g><path d="M1.4 -2.2 L4.6 -9.6 L7.8 -2.2" fill="none" stroke="#ffffff" stroke-width="1.6"/></svg>
<div class="t" style="left:364.03px;top:1553.71px;font:400 32px/38.40px 'Liberation Sans', sans-serif;color:#a5b8cb;transform:scaleX(1.0383);transform-origin:0 0;-webkit-text-stroke:0.4px currentColor;">jest.config.ts</div>
<div class="r" style="left:226px;top:1600px;width:759px;height:1px;background:#1a2f47;"></div>
<div class="r" style="left:226px;top:1601px;width:759px;height:52px;background:#031a30;"></div>
<svg class="r" style="left:245px;top:1615px;" width="16" height="26" viewBox="0 0 16 26"><path d="M2 1.5 L14 13 L2 24.5" fill="none" stroke="#b9c8d8" stroke-width="2.3"/></svg>
<div class="t" style="left:275.11px;top:1611.44px;font:700 27px/32.40px 'Liberation Sans', sans-serif;color:#6e89a3;transform:scaleX(1.0123);transform-origin:0 0;">OUTLINE</div>
<div class="r" style="left:226px;top:1653px;width:759px;height:1px;background:#1a2f47;"></div>
<div class="r" style="left:226px;top:1654px;width:759px;height:52px;background:#031a30;"></div>
<svg class="r" style="left:245px;top:1668px;" width="16" height="26" viewBox="0 0 16 26"><path d="M2 1.5 L14 13 L2 24.5" fill="none" stroke="#b9c8d8" stroke-width="2.3"/></svg>
<div class="t" style="left:275.93px;top:1664.44px;font:700 27px/32.40px 'Liberation Sans', sans-serif;color:#6e89a3;transform:scaleX(1.0093);transform-origin:0 0;">TIMELINE</div>
<div class="r" style="left:986px;top:143px;width:286px;height:82px;background:#0d2744;"></div>
<div class="r" style="left:1272px;top:143px;width:1px;height:82px;background:#1d2c45;"></div>
<svg class="r" style="left:1006px;top:164px;" width="44" height="44" viewBox="-22.299999999999955 -21.5 44 44"><text x="-15.6" y="9" font-family="Liberation Sans" font-weight="700" font-size="26.5" fill="#1f8ae6" textLength="29.4" lengthAdjust="spacingAndGlyphs">TS</text></svg>
<div class="t" style="left:1061.14px;top:165.91px;font:400 32px/38.40px 'Liberation Sans', sans-serif;color:#dce6f2;transform:scaleX(1.0370);transform-origin:0 0;-webkit-text-stroke:0.3px currentColor;">index.ts</div>
<svg class="r" style="left:1224px;top:172px;" width="27" height="26" viewBox="0 0 27 26"><path d="M3 3 L24 23 M24 3 L3 23" stroke="#d6e0ec" stroke-width="2.6"/></svg>
<div class="r" style="left:2473px;top:143px;width:2px;height:82px;background:#1a2a42;"></div>
<svg class="r" style="left:2490px;top:164px;" width="40" height="40" viewBox="0 0 24 24"><g fill="none" stroke="#d0d9e4" stroke-width="1.25" stroke-linecap="round" stroke-linejoin="round"><path d="M5.2 8.2 A8 8 0 1 1 4.2 13.2"/><path d="M3.6 4.4 V8.8 H8"/><path d="M12 8 V12.4 L15.3 15.7"/></g></svg>
<svg class="r" style="left:2552px;top:164px;" width="40" height="40" viewBox="0 0 24 24"><g fill="none" stroke="#d0d9e4" stroke-width="1.25" stroke-linecap="round" stroke-linejoin="round"><circle cx="14.2" cy="12" r="5"/><path d="M9.2 12 H2.6 M2.6 12 L6.1 8.5 M2.6 12 L6.1 15.5 M19.2 12 H21"/></g></svg>
<svg class="r" style="left:2616px;top:164px;" width="40" height="40" viewBox="0 0 24 24"><g fill="none" stroke="#4e6074" stroke-width="1.25" stroke-linecap="round" stroke-linejoin="round"><circle cx="12" cy="12" r="5"/><path d="M7 12 H3 M17 12 H21"/></g></svg>
<svg class="r" style="left:2677px;top:164px;" width="40" height="40" viewBox="0 0 24 24"><g fill="none" stroke="#4e6074" stroke-width="1.25" stroke-linecap="round" stroke-linejoin="round"><circle cx="9.8" cy="12" r="5"/><path d="M14.8 12 H21.4 M21.4 12 L17.9 8.5 M21.4 12 L17.9 15.5 M4.8 12 H3"/></g></svg>
<svg class="r" style="left:2739px;top:164px;" width="40" height="40" viewBox="0 0 24 24"><g fill="none" stroke="#d0d9e4" stroke-width="1.3" stroke-linecap="round" stroke-linejoin="round"><circle cx="12" cy="12" r="9.6"/><circle cx="10.3" cy="6.9" r="2" fill="#d0d9e4" stroke="none"/><circle cx="10.3" cy="17" r="2" fill="#d0d9e4" stroke="none"/><circle cx="14.8" cy="11.8" r="1.7" fill="#d0d9e4" stroke="none"/><path d="M10.3 6.9 V17 M10.3 6.9 L14.8 11.8"/></g></svg>
<svg class="r" style="left:2803px;top:164px;" width="40" height="40" viewBox="0 0 24 24"><g fill="none" stroke="#d0d9e4" stroke-width="1.3" stroke-linecap="round" stroke-linejoin="round"><rect x="4.2" y="3" width="15.6" height="18" rx="1.2"/><path d="M12 3 V21"/></g></svg>
<svg class="r" style="left:2862px;top:178px;" width="44" height="12" viewBox="0 0 44 12"><circle cx="9.3" cy="6" r="2.6" fill="#d0d9e4"/><circle cx="21.7" cy="6" r="2.6" fill="#d0d9e4"/><circle cx="34.1" cy="6" r="2.6" fill="#d0d9e4"/></svg>
<div class="t" style="left:1022.46px;top:232.71px;font:400 32px/38.40px 'Liberation Sans', sans-serif;color:#ae9fe2;transform:scaleX(1.0265);transform-origin:0 0;-webkit-text-stroke:0.35px currentColor;">packages</div>
<svg class="r" style="left:1175px;top:238px;" width="16" height="28" viewBox="0 0 16 28"><path d="M2 2 L13 14 L2 26" fill="none" stroke="#ae9fe2" stroke-width="2.4"/></svg>
<div class="t" style="left:1201.03px;top:232.71px;font:400 32px/38.40px 'Liberation Sans', sans-serif;color:#ae9fe2;transform:scaleX(1.0677);transform-origin:0 0;-webkit-text-stroke:0.35px currentColor;">create-my-own-react-app</div>
<svg class="r" style="left:1594px;top:238px;" width="16" height="28" viewBox="0 0 16 28"><path d="M2 2 L13 14 L2 26" fill="none" stroke="#ae9fe2" stroke-width="2.4"/></svg>
<div class="t" style="left:1619.91px;top:232.71px;font:400 32px/38.40px 'Liberation Sans', sans-serif;color:#ae9fe2;transform:scaleX(1.1022);transform-origin:0 0;-webkit-text-stroke:0.35px currentColor;">bin</div>
<svg class="r" style="left:1677px;top:238px;" width="16" height="28" viewBox="0 0 16 28"><path d="M2 2 L13 14 L2 26" fill="none" stroke="#ae9fe2" stroke-width="2.4"/></svg>
<svg class="r" style="left:1701px;top:232px;" width="44" height="44" viewBox="-21.700000000000045 -22.5 44 44"><text x="-15.6" y="9" font-family="Liberation Sans" font-weight="700" font-size="26.5" fill="#1f8ae6" textLength="29.4" lengthAdjust="spacingAndGlyphs">TS</text></svg>
<div class="t" style="left:1755.74px;top:232.71px;font:400 32px/38.40px 'Liberation Sans', sans-serif;color:#ae9fe2;transform:scaleX(1.0379);transform-origin:0 0;-webkit-text-stroke:0.35px currentColor;">index.ts</div>
<svg class="r" style="left:1881px;top:238px;" width="16" height="28" viewBox="0 0 16 28"><path d="M2 2 L13 14 L2 26" fill="none" stroke="#ae9fe2" stroke-width="2.4"/></svg>
<svg class="r" style="left:1908px;top:258px;" width="26" height="10" viewBox="0 0 26 10"><circle cx="4.8" cy="5" r="2.5" fill="#ae9fe2"/><circle cx="12.7" cy="5" r="2.5" fill="#ae9fe2"/><circle cx="20.7" cy="5" r="2.5" fill="#ae9fe2"/></svg>
<div class="r" style="left:1168px;top:280px;width:1738px;height:55px;background:rgba(0,0,0,0.22);"></div>
<div class="r" style="left:1168px;top:280px;width:22px;height:55px;background:#80a4c2;"></div>
<div class="r" style="left:1168px;top:556px;width:2px;height:1048px;background:#323f66;"></div>
<div class="r" style="left:1211px;top:666px;width:2px;height:55px;background:#323f66;"></div>
<div class="r" style="left:1211px;top:1273px;width:2px;height:165px;background:#323f66;"></div>
<div class="r" style="left:986px;top:279px;width:1953px;height:1427px;overflow:hidden;">
<div class="t" style="left:96.90px;top:7.19px;font:400 38px/45.60px 'Liberation Mono', monospace;letter-spacing:-1.20px;color:#c9e2f8;">1</div>
<div class="t" style="left:182.00px;top:7.19px;font:400 38px/45.60px 'Liberation Mono', monospace;letter-spacing:-1.20px;-webkit-text-stroke:0.55px currentColor;"><span style="color:#b9783f;">#</span><span style="color:#677a7b;font-style:italic;">!/usr/bin/env node</span></div>
<div class="t" style="left:96.90px;top:62.39px;font:400 38px/45.60px 'Liberation Mono', monospace;letter-spacing:-1.20px;color:#546a82;">2</div>
<div class="t" style="left:96.90px;top:117.59px;font:400 38px/45.60px 'Liberation Mono', monospace;letter-spacing:-1.20px;color:#546a82;">3</div>
<div class="t" style="left:182.00px;top:117.59px;font:400 38px/45.60px 'Liberation Mono', monospace;letter-spacing:-1.20px;-webkit-text-stroke:0.55px currentColor;"><span style="color:#c792ea;font-style:italic;">import</span><span style="color:#d6deeb;"> </span><span style="color:#ffd700;">{</span><span style="color:#d6deeb;"> createWorkspace </span><span style="color:#ffd700;">}</span><span style="color:#d6deeb;"> </span><span style="color:#c792ea;font-style:italic;">from</span><span style="color:#d6deeb;"> </span><span style="color:#d9f5dd;">&#x27;</span><span style="color:#f0c088;">create-nx-workspace</span><span style="color:#d9f5dd;">&#x27;</span><span style="color:#d6deeb;">;</span></div>
<div class="t" style="left:96.90px;top:172.79px;font:400 38px/45.60px 'Liberation Mono', monospace;letter-spacing:-1.20px;color:#546a82;">4</div>
<div class="t" style="left:96.90px;top:227.99px;font:400 38px/45.60px 'Liberation Mono', monospace;letter-spacing:-1.20px;color:#546a82;">5</div>
<div class="t" style="left:182.00px;top:227.99px;font:400 38px/45.60px 'Liberation Mono', monospace;letter-spacing:-1.20px;-webkit-text-stroke:0.55px currentColor;"><span style="color:#c792ea;font-style:italic;">async</span><span style="color:#d6deeb;"> </span><span style="color:#c792ea;">function</span><span style="color:#d6deeb;"> </span><span style="color:#82aaff;font-style:italic;">main</span><span style="color:#ffd700;">()</span><span style="color:#d6deeb;"> </span><span style="color:#ffd700;">{</span></div>
<div class="t" style="left:96.90px;top:283.19px;font:400 38px/45.60px 'Liberation Mono', monospace;letter-spacing:-1.20px;color:#546a82;">6</div>
<div class="r" style="left:938.00px;top:277.00px;width:108.00px;height:55.2px;background:#ffb52c;"></div>
<div class="t" style="left:182.00px;top:283.19px;font:400 38px/45.60px 'Liberation Mono', monospace;letter-spacing:-1.20px;-webkit-text-stroke:0.55px currentColor;"><span style="color:#d6deeb;">  </span><span style="color:#c792ea;">const</span><span style="color:#d6deeb;"> </span><span style="color:#82aaff;font-style:italic;">name</span><span style="color:#d6deeb;"> </span><span style="color:#c792ea;">=</span><span style="color:#d6deeb;"> </span><span style="color:#d6deeb;font-style:italic;">process</span><span style="color:#c792ea;">.</span><span style="color:#baebe2;font-style:italic;">argv</span><span style="color:#da70d6;">[</span><span style="color:#f78c6c;">2</span><span style="color:#da70d6;">]</span><span style="color:#d6deeb;">;</span><span style="color:#d6deeb;"> </span><span style="color:#677a7b;font-style:italic;">//</span><span style="color:#677a7b;font-style:italic;"> </span><span style="color:#ffffff;font-style:italic;">TODO:</span><span style="color:#677a7b;font-style:italic;"> use libraries like yargs or enquirer to simplify</span></div>
<div class="t" style="left:96.90px;top:338.39px;font:400 38px/45.60px 'Liberation Mono', monospace;letter-spacing:-1.20px;color:#546a82;">7</div>
<div class="t" style="left:182.00px;top:338.39px;font:400 38px/45.60px 'Liberation Mono', monospace;letter-spacing:-1.20px;-webkit-text-stroke:0.55px currentColor;"><span style="color:#d6deeb;">  </span><span style="color:#c792ea;">if</span><span style="color:#d6deeb;"> </span><span style="color:#da70d6;">(</span><span style="color:#c792ea;">!</span><span style="color:#d6deeb;">name</span><span style="color:#da70d6;">)</span><span style="color:#d6deeb;"> </span><span style="color:#da70d6;">{</span></div>
<div class="t" style="left:96.90px;top:393.59px;font:400 38px/45.60px 'Liberation Mono', monospace;letter-spacing:-1.20px;color:#546a82;">8</div>
<div class="r" style="left:614.00px;top:395.20px;width:172.80px;height:39px;background:#0e2133;"></div>
<div class="t" style="left:182.00px;top:393.59px;font:400 38px/45.60px 'Liberation Mono', monospace;letter-spacing:-1.20px;-webkit-text-stroke:0.55px currentColor;"><span style="color:#d6deeb;">    </span><span style="color:#c792ea;font-style:italic;">throw</span><span style="color:#d6deeb;"> </span><span style="color:#7fdbca;">new</span><span style="color:#d6deeb;"> </span><span style="color:#82aaff;font-style:italic;">Error</span><span style="color:#179fff;">(</span><span style="display:inline-block;width:184.00px;color:#9ea4ab;">message:</span><span style="color:#d9f5dd;">&#x27;</span><span style="color:#f0c088;">Please provide a name for the workspace</span><span style="color:#d9f5dd;">&#x27;</span><span style="color:#179fff;">)</span><span style="color:#d6deeb;">;</span></div>
<div class="t" style="left:96.90px;top:448.79px;font:400 38px/45.60px 'Liberation Mono', monospace;letter-spacing:-1.20px;color:#546a82;">9</div>
<div class="t" style="left:182.00px;top:448.79px;font:400 38px/45.60px 'Liberation Mono', monospace;letter-spacing:-1.20px;-webkit-text-stroke:0.55px currentColor;"><span style="color:#d6deeb;">  </span><span style="color:#da70d6;">}</span></div>
<div class="t" style="left:75.30px;top:503.99px;font:400 38px/45.60px 'Liberation Mono', monospace;letter-spacing:-1.20px;color:#546a82;">10</div>
<div class="t" style="left:75.30px;top:559.19px;font:400 38px/45.60px 'Liberation Mono', monospace;letter-spacing:-1.20px;color:#546a82;">11</div>
<div class="r" style="left:484.40px;top:560.80px;width:172.80px;height:39px;background:#0e2133;"></div>
<div class="t" style="left:182.00px;top:559.19px;font:400 38px/45.60px 'Liberation Mono', monospace;letter-spacing:-1.20px;-webkit-text-stroke:0.55px currentColor;"><span style="color:#d6deeb;">  </span><span style="color:#d6deeb;">console</span><span style="color:#c792ea;">.</span><span style="color:#82aaff;font-style:italic;">log</span><span style="color:#da70d6;">(</span><span style="display:inline-block;width:184.00px;color:#9ea4ab;">message:</span><span style="color:#d6deeb;">`</span><span style="color:#f0c088;">Creating the workspace: </span><span style="color:#d3423e;">${</span><span style="color:#d6deeb;">name</span><span style="color:#d3423e;">}</span><span style="color:#d6deeb;">`</span><span style="color:#da70d6;">)</span><span style="color:#d6deeb;">;</span></div>
<div class="t" style="left:75.30px;top:614.39px;font:400 38px/45.60px 'Liberation Mono', monospace;letter-spacing:-1.20px;color:#546a82;">12</div>
<div class="t" style="left:75.30px;top:669.59px;font:400 38px/45.60px 'Liberation Mono', monospace;letter-spacing:-1.20px;color:#546a82;">13</div>
<div class="t" style="left:182.00px;top:669.59px;font:400 38px/45.60px 'Liberation Mono', monospace;letter-spacing:-1.20px;-webkit-text-stroke:0.55px currentColor;"><span style="color:#d6deeb;">  </span><span style="color:#677a7b;font-style:italic;">// This assumes &quot;my-own-react&quot; and &quot;create-my-own-react-app&quot; are at the same version</span></div>
<div class="t" style="left:75.30px;top:724.79px;font:400 38px/45.60px 'Liberation Mono', monospace;letter-spacing:-1.20px;color:#546a82;">14</div>
<div class="t" style="left:182.00px;top:724.79px;font:400 38px/45.60px 'Liberation Mono', monospace;letter-spacing:-1.20px;-webkit-text-stroke:0.55px currentColor;"><span style="color:#d6deeb;">  </span><span style="color:#677a7b;font-style:italic;">// eslint-disable-next-line @typescript-eslint/no-var-requires</span></div>
<div class="t" style="left:75.30px;top:779.99px;font:400 38px/45.60px 'Liberation Mono', monospace;letter-spacing:-1.20px;color:#546a82;">15</div>
<div class="r" style="left:873.20px;top:781.60px;width:64.80px;height:39px;background:#0e2133;"></div>
<div class="t" style="left:182.00px;top:779.99px;font:400 38px/45.60px 'Liberation Mono', monospace;letter-spacing:-1.20px;-webkit-text-stroke:0.55px currentColor;"><span style="color:#d6deeb;">  </span><span style="color:#c792ea;">const</span><span style="color:#d6deeb;"> </span><span style="color:#82aaff;font-style:italic;">presetVersion</span><span style="color:#d6deeb;"> </span><span style="color:#c792ea;">=</span><span style="color:#d6deeb;"> </span><span style="color:#82aaff;font-style:italic;">require</span><span style="color:#da70d6;">(</span><span style="display:inline-block;width:76.00px;color:#9ea4ab;">id:</span><span style="color:#d9f5dd;">&#x27;</span><span style="color:#f0c088;">../package.json</span><span style="color:#d9f5dd;">&#x27;</span><span style="color:#da70d6;">)</span><span style="color:#c792ea;">.</span><span style="color:#baebe2;font-style:italic;">version</span><span style="color:#d6deeb;">;</span></div>
<div class="t" style="left:75.30px;top:835.19px;font:400 38px/45.60px 'Liberation Mono', monospace;letter-spacing:-1.20px;color:#546a82;">16</div>
<div class="t" style="left:75.30px;top:890.39px;font:400 38px/45.60px 'Liberation Mono', monospace;letter-spacing:-1.20px;color:#546a82;">17</div>
<div class="r" style="left:290.00px;top:884.20px;width:108.00px;height:55.2px;background:#ffb52c;"></div>
<div class="t" style="left:182.00px;top:890.39px;font:400 38px/45.60px 'Liberation Mono', monospace;letter-spacing:-1.20px;-webkit-text-stroke:0.55px currentColor;"><span style="color:#d6deeb;">  </span><span style="color:#677a7b;font-style:italic;">//</span><span style="color:#677a7b;font-style:italic;"> </span><span style="color:#ffffff;font-style:italic;">TODO:</span><span style="color:#677a7b;font-style:italic;"> update below to customize the workspace</span></div>
<div class="t" style="left:75.30px;top:945.59px;font:400 38px/45.60px 'Liberation Mono', monospace;letter-spacing:-1.20px;color:#546a82;">18</div>
<div class="r" style="left:1175.60px;top:947.20px;width:151.20px;height:39px;background:#0e2133;"></div>
<div class="t" style="left:182.00px;top:945.59px;font:400 38px/45.60px 'Liberation Mono', monospace;letter-spacing:-1.20px;-webkit-text-stroke:0.55px currentColor;"><span style="color:#d6deeb;">  </span><span style="color:#c792ea;">const</span><span style="color:#d6deeb;"> </span><span style="color:#da70d6;">{</span><span style="color:#d6deeb;"> </span><span style="color:#82aaff;font-style:italic;">directory</span><span style="color:#d6deeb;"> </span><span style="color:#da70d6;">}</span><span style="color:#d6deeb;"> </span><span style="color:#c792ea;">=</span><span style="color:#d6deeb;"> </span><span style="color:#c792ea;font-style:italic;">await</span><span style="color:#d6deeb;"> </span><span style="color:#82aaff;font-style:italic;">createWorkspace</span><span style="color:#da70d6;">(</span><span style="display:inline-block;width:162.40px;color:#9ea4ab;">preset:</span><span style="color:#d6deeb;">`</span><span style="color:#f0c088;font-style:italic;">my-own-react@</span><span style="color:#d3423e;">${</span><span style="color:#d6deeb;font-style:italic;">presetVersion</span><span style="color:#d3423e;">}</span><span style="color:#d6deeb;">`</span><span style="color:#d6deeb;">, {</span></div>
<div class="t" style="left:75.30px;top:1000.79px;font:400 38px/45.60px 'Liberation Mono', monospace;letter-spacing:-1.20px;color:#546a82;">19</div>
<div class="t" style="left:182.00px;top:1000.79px;font:400 38px/45.60px 'Liberation Mono', monospace;letter-spacing:-1.20px;-webkit-text-stroke:0.55px currentColor;"><span style="color:#d6deeb;">    </span><span style="color:#d6deeb;font-style:italic;">name</span><span style="color:#5f7e97;">,</span></div>
<div class="t" style="left:75.30px;top:1055.99px;font:400 38px/45.60px 'Liberation Mono', monospace;letter-spacing:-1.20px;color:#546a82;">20</div>
<div class="t" style="left:182.00px;top:1055.99px;font:400 38px/45.60px 'Liberation Mono', monospace;letter-spacing:-1.20px;-webkit-text-stroke:0.55px currentColor;"><span style="color:#d6deeb;">    </span><span style="color:#c792ea;font-style:italic;">nxCloud</span><span style="color:#c792ea;">:</span><span style="color:#d6deeb;"> </span><span style="color:#ff5874;font-style:italic;">false</span><span style="color:#5f7e97;">,</span></div>
<div class="t" style="left:75.30px;top:1111.19px;font:400 38px/45.60px 'Liberation Mono', monospace;letter-spacing:-1.20px;color:#546a82;">21</div>
<div class="t" style="left:182.00px;top:1111.19px;font:400 38px/45.60px 'Liberation Mono', monospace;letter-spacing:-1.20px;-webkit-text-stroke:0.55px currentColor;"><span style="color:#d6deeb;">    </span><span style="color:#c792ea;font-style:italic;">packageManager</span><span style="color:#c792ea;">:</span><span style="color:#d6deeb;"> </span><span style="color:#d9f5dd;">&#x27;</span><span style="color:#f0c088;">npm</span><span style="color:#d9f5dd;">&#x27;</span><span style="color:#5f7e97;">,</span></div>
<div class="t" style="left:75.30px;top:1166.39px;font:400 38px/45.60px 'Liberation Mono', monospace;letter-spacing:-1.20px;color:#546a82;">22</div>
<div class="t" style="left:182.00px;top:1166.39px;font:400 38px/45.60px 'Liberation Mono', monospace;letter-spacing:-1.20px;-webkit-text-stroke:0.55px currentColor;"><span style="color:#d6deeb;">  </span><span style="color:#179fff;">}</span><span style="color:#da70d6;">)</span><span style="color:#d6deeb;">;</span></div>
<div class="t" style="left:75.30px;top:1221.59px;font:400 38px/45.60px 'Liberation Mono', monospace;letter-spacing:-1.20px;color:#546a82;">23</div>
<div class="t" style="left:75.30px;top:1276.79px;font:400 38px/45.60px 'Liberation Mono', monospace;letter-spacing:-1.20px;color:#546a82;">24</div>
<div class="r" style="left:484.40px;top:1278.40px;width:172.80px;height:39px;background:#0e2133;"></div>
<div class="t" style="left:182.00px;top:1276.79px;font:400 38px/45.60px 'Liberation Mono', monospace;letter-spacing:-1.20px;-webkit-text-stroke:0.55px currentColor;"><span style="color:#d6deeb;">  </span><span style="color:#d6deeb;">console</span><span style="color:#c792ea;">.</span><span style="color:#82aaff;font-style:italic;">log</span><span style="color:#da70d6;">(</span><span style="display:inline-block;width:184.00px;color:#9ea4ab;">message:</span><span style="color:#d6deeb;">`</span><span style="color:#f0c088;">Successfully created the workspace: </span><span style="color:#d3423e;">${</span><span style="color:#d6deeb;">directory</span><span style="color:#d3423e;">}</span><span style="color:#f0c088;">.</span><span style="color:#d6deeb;">`</span><span style="color:#da70d6;">)</span><span style="color:#d6deeb;">;</span></div>
<div class="t" style="left:75.30px;top:1331.99px;font:400 38px/45.60px 'Liberation Mono', monospace;letter-spacing:-1.20px;color:#546a82;">25</div>
<div class="t" style="left:182.00px;top:1331.99px;font:400 38px/45.60px 'Liberation Mono', monospace;letter-spacing:-1.20px;-webkit-text-stroke:0.55px currentColor;"><span style="color:#ffd700;">}</span></div>
<div class="t" style="left:75.30px;top:1387.19px;font:400 38px/45.60px 'Liberation Mono', monospace;letter-spacing:-1.20px;color:#546a82;">26</div>
</div>
<div class="r" style="left:2906px;top:279px;width:33px;height:697px;background:rgba(8,77,129,0.5);"></div>
<div class="r" style="left:2906px;top:976px;width:1px;height:730px;background:#1a2b40;"></div>
<div class="r" style="left:2930px;top:414px;width:9px;height:26px;background:#8b8574;"></div>
<div class="r" style="left:2930px;top:711px;width:9px;height:27px;background:#8b8574;"></div>
<div class="r" style="left:1168px;top:1677px;width:1298px;height:29px;background:rgba(8,77,129,0.52);"></div>
<div class="r" style="left:113px;top:1708px;width:81px;height:51px;background:#4a5770;"></div>
<svg class="r" style="left:136px;top:1712px;" width="32" height="36" viewBox="136 1712 32 36"><path d="M143 1725.7 L152.1 1734.6 L143 1743.4 M161.9 1717.4 L153.2 1726.1 L161.9 1734.8" fill="none" stroke="#f4f7fb" stroke-width="2.3" stroke-linecap="round"/></svg>
<svg class="r" style="left:207px;top:1716px;" width="34" height="34" viewBox="0 0 24 24"><g fill="none" stroke="#8092a8" stroke-width="1.2" stroke-linecap="round" stroke-linejoin="round"><circle cx="6.2" cy="4.6" r="2.3"/><circle cx="6.2" cy="19.4" r="2.3"/><circle cx="17.6" cy="8.6" r="2.3"/><path d="M6.2 6.9 V17.1 M17.6 10.9 Q17.6 13.6 13.6 14 H9.6 Q6.8 14.4 6.2 16.2"/></g></svg>
<div class="t" style="left:249.43px;top:1714.40px;font:400 30px/36.00px 'Liberation Sans', sans-serif;color:#8092a8;transform:scaleX(1.0123);transform-origin:0 0;-webkit-text-stroke:0.3px currentColor;">main</div>
<svg class="r" style="left:328px;top:1716px;" width="34" height="34" viewBox="0 0 24 24"><g fill="none" stroke="#8092a8" stroke-width="1.2" stroke-linecap="round" stroke-linejoin="round"><path d="M7.4 17.4 H6.4 Q2.2 17.4 2.2 13.6 Q2.2 10.2 5.8 9.8 Q6.6 5.4 11.4 5.4 Q15.6 5.4 16.8 9.4 Q21.6 9.4 21.8 13.4 Q21.8 17.4 17.6 17.4 H16.4"/><path d="M12 21.4 V11.4 M8.8 14.4 L12 11.2 L15.2 14.4"/></g></svg>
<svg class="r" style="left:394px;top:1716px;" width="34" height="34" viewBox="0 0 24 24"><g fill="none" stroke="#8092a8" stroke-width="1.2" stroke-linecap="round" stroke-linejoin="round"><circle cx="5.8" cy="5.2" r="2.3"/><circle cx="5.8" cy="17.8" r="2.3"/><path d="M5.8 7.5 V15.5"/><circle cx="18.2" cy="9.6" r="2.3"/><path d="M18.2 11.9 Q18.2 15.6 14 15.6 H12.4 M12 2 V22"/></g></svg>
<svg class="r" style="left:467px;top:1716px;" width="34" height="34" viewBox="0 0 24 24"><g fill="none" stroke="#8092a8" stroke-width="1.2" stroke-linecap="round" stroke-linejoin="round"><circle cx="12" cy="12" r="9.6"/><path d="M8.4 8.4 L15.6 15.6 M15.6 8.4 L8.4 15.6"/></g></svg>
<div class="t" style="left:509.75px;top:1714.40px;font:400 30px/36.00px 'Liberation Sans', sans-serif;color:#8092a8;transform:scaleX(1.0417);transform-origin:0 0;-webkit-text-stroke:0.3px currentColor;">0</div>
<svg class="r" style="left:535px;top:1716px;" width="34" height="34" viewBox="0 0 24 24"><g fill="none" stroke="#8092a8" stroke-width="1.2" stroke-linecap="round" stroke-linejoin="round"><path d="M12 2.8 L22.2 20.6 H1.8 Z"/><path d="M12 9 V14.6"/><circle cx="12" cy="17.4" r="0.6" fill="#8092a8"/></g></svg>
<div class="t" style="left:577.95px;top:1714.40px;font:400 30px/36.00px 'Liberation Sans', sans-serif;color:#8092a8;transform:scaleX(1.0417);transform-origin:0 0;-webkit-text-stroke:0.3px currentColor;">0</div>
<svg class="r" style="left:634px;top:1716px;" width="34" height="34" viewBox="0 0 24 24"><g fill="none" stroke="#8092a8" stroke-width="1.2" stroke-linecap="round" stroke-linejoin="round"><path d="M7.6 16.6 H2.6 V3.6 H21.4 V7"/><path d="M9.8 8.6 H21.6 V18 H17.2 L14.2 21.2 V18 H9.8 Z"/></g></svg>
<div class="t" style="left:675.08px;top:1714.40px;font:400 30px/36.00px 'Liberation Sans', sans-serif;color:#8092a8;transform:scaleX(1.0145);transform-origin:0 0;-webkit-text-stroke:0.3px currentColor;">CodeStream</div>
<svg class="r" style="left:890px;top:1716px;" width="34" height="34" viewBox="0 0 24 24"><g fill="none" stroke="#8092a8" stroke-width="1.2" stroke-linecap="round" stroke-linejoin="round"><path d="M13.4 3.6 L20.6 9.6 L13.4 15.4 V12 Q6.8 12 4.2 17.2 Q4.2 7.8 13.4 7.4 Z"/><circle cx="9.2" cy="19" r="2.4"/></g></svg>
<div class="t" style="left:930.91px;top:1714.40px;font:400 30px/36.00px 'Liberation Sans', sans-serif;color:#8092a8;transform:scaleX(0.9961);transform-origin:0 0;-webkit-text-stroke:0.3px currentColor;">Live Share</div>
<div class="t" style="left:1111.58px;top:1714.40px;font:400 30px/36.00px 'Liberation Sans', sans-serif;color:#8092a8;transform:scaleX(1.0150);transform-origin:0 0;-webkit-text-stroke:0.3px currentColor;">Git Graph</div>
<div class="t" style="left:1280.57px;top:1714.40px;font:400 30px/36.00px 'Liberation Sans', sans-serif;color:#8092a8;transform:scaleX(1.0557);transform-origin:0 0;-webkit-text-stroke:0.3px currentColor;">-- NORMAL --</div>
<div class="t" style="left:1835.44px;top:1714.40px;font:400 30px/36.00px 'Liberation Sans', sans-serif;color:#8092a8;transform:scaleX(1.0241);transform-origin:0 0;-webkit-text-stroke:0.3px currentColor;">Ln 1, Col 1</div>
<div class="t" style="left:2022.24px;top:1714.40px;font:400 30px/36.00px 'Liberation Sans', sans-serif;color:#8092a8;transform:scaleX(1.0107);transform-origin:0 0;-webkit-text-stroke:0.3px currentColor;">Spaces: 2</div>
<div class="t" style="left:2194.63px;top:1714.40px;font:400 30px/36.00px 'Liberation Sans', sans-serif;color:#8092a8;transform:scaleX(1.0534);transform-origin:0 0;-webkit-text-stroke:0.3px currentColor;">UTF-8</div>
<div class="t" style="left:2320.95px;top:1714.40px;font:400 30px/36.00px 'Liberation Sans', sans-serif;color:#8092a8;transform:scaleX(0.9793);transform-origin:0 0;-webkit-text-stroke:0.3px currentColor;">LF</div>
<div class="t" style="left:2392.17px;top:1714.40px;font:400 30px/36.00px 'Liberation Sans', sans-serif;color:#8092a8;transform:scaleX(0.9487);transform-origin:0 0;-webkit-text-stroke:0.3px currentColor;">{ }</div>
<div class="t" style="left:2436.68px;top:1714.40px;font:400 30px/36.00px 'Liberation Sans', sans-serif;color:#8092a8;transform:scaleX(1.0309);transform-origin:0 0;-webkit-text-stroke:0.3px currentColor;">TypeScript</div>
<svg class="r" style="left:2616px;top:1716px;" width="34" height="34" viewBox="0 0 24 24"><g fill="none" stroke="#8092a8" stroke-width="1.5" stroke-linecap="round" stroke-linejoin="round"><path d="M4.4 11 Q2.2 11.6 2.2 14.2 V16.6 Q2.2 18.6 5 19.8 Q8.4 21.4 12 21.4 Q15.6 21.4 19 19.8 Q21.8 18.6 21.8 16.6 V14.2 Q21.8 11.6 19.6 11"/><path d="M5 11.8 Q3.6 4.2 8.2 3.8 Q11 3.6 12 6.4 Q13 3.6 15.8 3.8 Q20.4 4.2 19 11.8 Q18.6 13.4 15.8 13.2 Q12.8 13 12 10.2 Q11.2 13 8.2 13.2 Q5.4 13.4 5 11.8 Z"/><path d="M9.4 15.6 V17.8 M14.6 15.6 V17.8"/></g></svg>
<svg class="r" style="left:2687px;top:1716px;" width="34" height="34" viewBox="0 0 24 24"><g fill="none" stroke="#8092a8" stroke-width="1.2" stroke-linecap="round" stroke-linejoin="round"><path d="M1.8 13.2 L5.6 17.4 L12.4 6.8 M8.6 15 L10.6 17.4 L21.8 5"/></g></svg>
<div class="t" style="left:2729.37px;top:1714.40px;font:400 30px/36.00px 'Liberation Sans', sans-serif;color:#8092a8;transform:scaleX(1.0549);transform-origin:0 0;-webkit-text-stroke:0.3px currentColor;">Prettier</div>
<svg class="r" style="left:2870px;top:1716px;" width="34" height="34" viewBox="0 0 24 24"><g fill="none" stroke="#8092a8" stroke-width="1.2" stroke-linecap="round" stroke-linejoin="round"><path d="M12 3.2 Q6.4 3.2 6.4 9 V14.6 L4 18.2 H20 L17.6 14.6 V9 Q17.6 3.2 12 3.2"/><path d="M10 20.2 Q12 22.4 14 20.2"/></g></svg>
<div class="r" style="left:2884px;top:1714px;width:16px;height:16px;border-radius:8px;background:#8fa2b8;box-shadow:0 0 0 2px #02152b;"></div>
</div>
<div class="r" style="left:112px;top:76px;width:2828px;height:1683.5px;border:1.6px solid #4c5566;border-top-color:#5f6874;border-bottom-color:#3d4b60;border-radius:20px;"></div>
</body></html>
